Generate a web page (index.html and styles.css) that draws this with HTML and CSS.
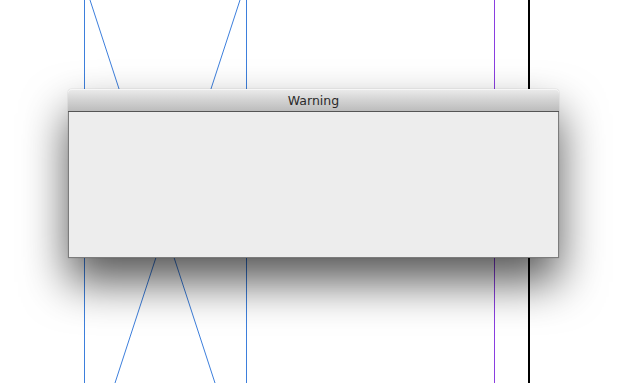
FILE: index.html
```html
<!DOCTYPE html>
<html>
<head>
<meta charset="utf-8">
<link rel="stylesheet" href="styles.css">
</head>
<body>
<div class="stage">
  <svg class="canvas" width="629" height="383" viewBox="0 0 629 383">
    <line x1="84.5" y1="0" x2="84.5" y2="383" stroke="#3d7fdc" stroke-width="1"/>
    <line x1="246.5" y1="0" x2="246.5" y2="383" stroke="#3d7fdc" stroke-width="1"/>
    <line x1="90" y1="0" x2="215" y2="383" stroke="#3d7fdc" stroke-width="1"/>
    <line x1="240" y1="0" x2="115" y2="383" stroke="#3d7fdc" stroke-width="1"/>
    <line x1="494.5" y1="0" x2="494.5" y2="383" stroke="#8a3ee0" stroke-width="1"/>
    <line x1="529" y1="0" x2="529" y2="383" stroke="#000" stroke-width="2"/>
  </svg>
  <div class="dialog">
    <div class="titlebar">Warning</div>
    <div class="body"></div>
  </div>
</div>
</body>
</html>
```
FILE: styles.css
```css
html, body {
  margin: 0;
  padding: 0;
  background: #fff;
  overflow: hidden;
}
.stage {
  position: relative;
  width: 629px;
  height: 383px;
}
.canvas {
  position: absolute;
  left: 0;
  top: 0;
  display: block;
}
.dialog {
  position: absolute;
  left: 68px;
  top: 89px;
  width: 491px;
  height: 169px;
  display: flex;
  flex-direction: column;
  border-radius: 4px 4px 0 0;
  box-shadow: 0 24px 45px rgba(0, 0, 0, 0.66), 0 0 1px rgba(0,0,0,0.4);
}
.titlebar {
  height: 23px;
  box-sizing: border-box;
  border-bottom: 1px solid #555;
  border-radius: 4px 4px 0 0;
  background: linear-gradient(#ececec, #d3d3d3 50%, #bcbcbc);
  box-shadow: inset 0 1px 0 #f6f6f6;
  text-align: center;
  font-family: "DejaVu Sans", "Liberation Sans", sans-serif;
  font-size: 12.5px;
  line-height: 24px;
  color: #2a2a2a;
}
.body {
  flex: 1;
  background: #ededed;
  border: 1px solid #7c7c7c;
  border-top: none;
}
```
